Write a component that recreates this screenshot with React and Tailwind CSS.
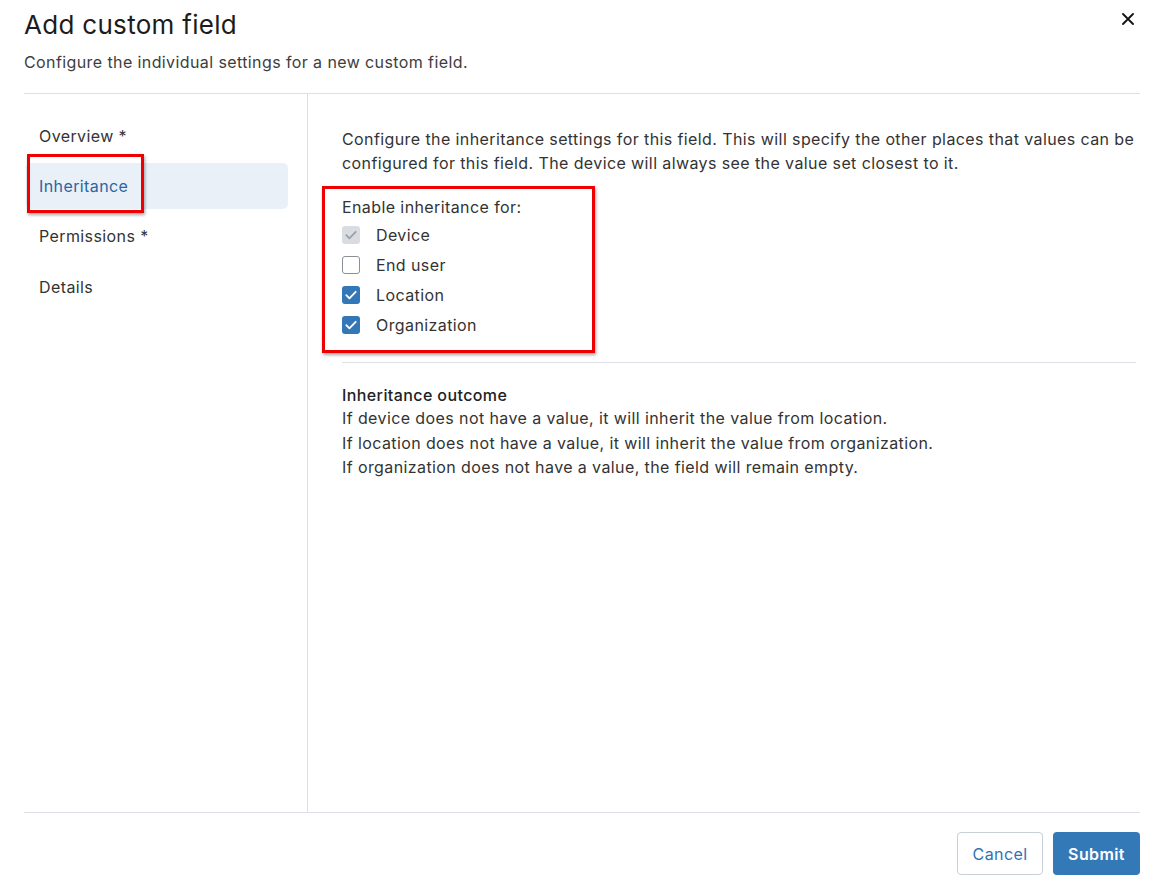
import React from "react";

function Check({ state }) {
  if (state === "disabled") {
    return (
      <span className="w-[18px] h-[18px] rounded-[3px] bg-[#d9dde2] flex items-center justify-center">
        <svg width="14" height="14" viewBox="0 0 14 14" fill="none"><path d="M2.3 7.2l3.1 3.1L11.7 3.8" stroke="#9aa1a9" strokeWidth="1.8" strokeLinecap="round" strokeLinejoin="round"/></svg>
      </span>
    );
  }
  if (state === "checked") {
    return (
      <span className="w-[18px] h-[18px] rounded-[3px] bg-[#3377b8] flex items-center justify-center">
        <svg width="14" height="14" viewBox="0 0 14 14" fill="none"><path d="M2.3 7.2l3.1 3.1L11.7 3.8" stroke="#ffffff" strokeWidth="1.8" strokeLinecap="round" strokeLinejoin="round"/></svg>
      </span>
    );
  }
  return <span className="w-[18px] h-[18px] rounded-[3px] border border-[#8a9098] bg-white" />;
}

export default function App() {
  const font = { fontFamily: "Inter, 'Noto Sans', sans-serif" };
  return (
    <div className="w-[1159px] h-[892px] bg-white relative text-[#2b2b2b] tracking-[0.4px]" style={font}>
      <div className="pl-6 pr-[19px] pt-[8px] flex flex-col h-full">
        <div className="flex items-start justify-between">
          <h1 className="text-[26px] leading-[34px] text-[#1c1c1c] tracking-[0.3px]">Add custom field</h1>
          <button className="mt-[2px] mr-[3px] w-[18px] h-[18px] flex items-center justify-center">
            <svg width="12" height="12" viewBox="0 0 12 12"><path d="M1 1l10 10M11 1L1 11" stroke="#111" strokeWidth="1.8" strokeLinecap="round"/></svg>
          </button>
        </div>
        <p className="text-[16px] leading-[24px] text-[#3d3d3d] mt-[8px]">Configure the individual settings for a new custom field.</p>
        <div className="mt-[19px] border-t border-[#dcdfe3] flex flex-1 min-h-0">
          <div className="w-[284px] border-r border-[#dcdfe3] pt-[19px] pr-[19px]">
            <div className="h-[46px] flex items-center pl-[15px] text-[16px] text-[#333]">Overview *</div>
            <div className="h-[46px] mt-[4px] flex items-center pl-[13px] ml-[2px] rounded-[5px] bg-[#e9f0f7] text-[16px] text-[#2a65a3]">Inheritance</div>
            <div className="h-[46px] mt-[4px] flex items-center pl-[15px] text-[16px] text-[#333]">Permissions *</div>
            <div className="h-[47px] mt-[4px] flex items-center pl-[15px] text-[16px] text-[#333]">Details</div>
          </div>
          <div className="flex-1 pl-[34px] pr-[4px] pt-[33px]">
            <p className="text-[16px] leading-[24px] text-[#333]">
              Configure the inheritance settings for this field. This will specify the other places that values can be configured for this field. The device will always see the value set closest to it.
            </p>
            <div className="mt-[20px] text-[16px] leading-[24px] text-[#333]">Enable inheritance for:</div>
            <div className="flex flex-col mt-[1px]">
              {[
                ["disabled", "Device"],
                ["empty", "End user"],
                ["checked", "Location"],
                ["checked", "Organization"],
              ].map(([s, l]) => (
                <label key={l} className="h-[30px] flex items-center gap-[16px] text-[16px] text-[#333]">
                  <Check state={s} />
                  <span>{l}</span>
                </label>
              ))}
            </div>
            <div className="mt-[22px] border-t border-[#dcdfe3]" />
            <div className="mt-[20px] text-[16px] leading-[24px] font-medium text-[#222]">Inheritance outcome</div>
            <div className="text-[16px] leading-[24.5px] text-[#333] -mt-[1px]">
              <div>If device does not have a value, it will inherit the value from location.</div>
              <div>If location does not have a value, it will inherit the value from organization.</div>
              <div>If organization does not have a value, the field will remain empty.</div>
            </div>
          </div>
        </div>
        <div className="border-t border-[#dcdfe3] h-[80px] flex items-start justify-end gap-[10px] pt-[19px]">
          <button className="h-[43px] w-[86px] rounded-[4px] border border-[#c9cfd6] bg-white text-[16px] text-[#2f73b4]">Cancel</button>
          <button className="h-[43px] w-[87px] rounded-[4px] bg-[#3479b7] text-[16px] font-semibold text-white">Submit</button>
        </div>
      </div>
      <div className="absolute left-[27px] top-[154px] w-[117px] h-[59px] border-[3px] border-[#ee0000] shadow-[1px_2px_3px_rgba(0,0,0,0.35)] pointer-events-none" />
      <div className="absolute left-[322px] top-[186px] w-[273px] h-[167px] border-[3px] border-[#ee0000] shadow-[1px_2px_3px_rgba(0,0,0,0.35)] pointer-events-none" />
    </div>
  );
}
